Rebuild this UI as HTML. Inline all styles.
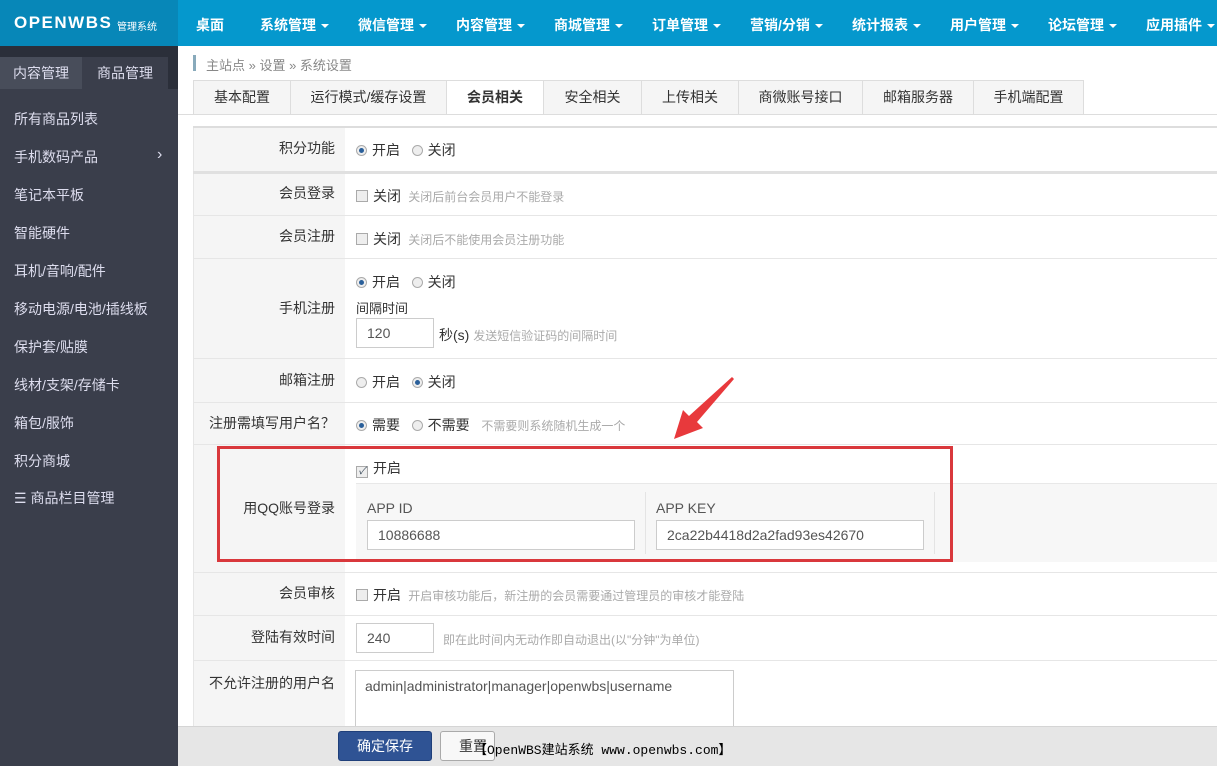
<!DOCTYPE html>
<html><head><meta charset="utf-8"><style>
*{margin:0;padding:0;box-sizing:border-box}
body{width:1217px;height:766px;overflow:hidden;position:relative;font-family:"Liberation Sans","Noto Sans CJK SC",sans-serif;font-size:13px;color:#333;background:#fff}
.a{position:absolute}
#top{left:0;top:0;width:1217px;height:46px;background:#0598cd}
#logo{left:0;top:0;width:178px;height:46px;background:#0787b8;color:#fff}
.nav{top:15px;color:#fff;font-weight:bold;font-size:14px;white-space:nowrap}
.car{display:inline-block;border-top:4px solid #fff;border-left:4px solid transparent;border-right:4px solid transparent;vertical-align:middle;margin-left:5px}
#side{left:0;top:46px;width:178px;height:720px;background:#3a3e4b}
.si{left:14px;color:#dde;font-size:14px}
.tab{top:80px;height:35px;border:1px solid #ddd;border-right:none;background:#f5f5f5;text-align:center;line-height:33px;font-size:14px;color:#333}
.row{left:193px;width:1024px;border-top:1px solid #e6e6e6}
.lab{left:193px;width:152px;background:#f5f5f5;border-left:1px solid #e6e6e6;text-align:right;padding-right:10px;font-size:14px;color:#333}
.t{font-size:14px;color:#333;white-space:nowrap}
.g{font-size:12px;color:#aaa;white-space:nowrap}
.rd{display:inline-block;width:11px;height:11px;border:1px solid #aaa;border-radius:50%;background:#eee;vertical-align:-1px;margin-right:5px;position:relative}
.rd.on::after{content:"";position:absolute;left:2px;top:2px;width:5px;height:5px;border-radius:50%;background:#2a5f9a}
.cb{display:inline-block;width:12px;height:12px;border:1px solid #aaa;background:#eee;vertical-align:-1px;margin-right:5px;font-size:10px;line-height:10px;color:#345;text-align:center}
.inp{border:1px solid #ccc;background:#fff;height:30px;line-height:28px;padding-left:10px;font-size:14px;color:#555}
</style></head><body>
<div id="top" class="a"></div>
<div id="logo" class="a"><span class="a" style="left:14px;top:13px;font-size:17px;font-weight:900;letter-spacing:1.5px">OPENWBS</span><span class="a" style="left:117px;top:18px;font-size:10px">管理系统</span></div>
<span class="a nav" style="left:196px">桌面</span>
<span class="a nav" style="left:260px">系统管理<i class="car"></i></span>
<span class="a nav" style="left:358px">微信管理<i class="car"></i></span>
<span class="a nav" style="left:456px">内容管理<i class="car"></i></span>
<span class="a nav" style="left:554px">商城管理<i class="car"></i></span>
<span class="a nav" style="left:652px">订单管理<i class="car"></i></span>
<span class="a nav" style="left:750px">营销/分销<i class="car"></i></span>
<span class="a nav" style="left:852px">统计报表<i class="car"></i></span>
<span class="a nav" style="left:950px">用户管理<i class="car"></i></span>
<span class="a nav" style="left:1048px">论坛管理<i class="car"></i></span>
<span class="a nav" style="left:1146px">应用插件<i class="car"></i></span>
<div id="side" class="a"></div>
<div class="a" style="left:0;top:46px;width:178px;height:11px;background:#2b2f3a"></div>
<div class="a" style="left:168px;top:57px;width:10px;height:32px;background:#2b2f3a"></div>
<div class="a" style="left:0;top:57px;width:82px;height:32px;background:#484d5a;color:#dde;font-size:14px;text-align:center;line-height:32px">内容管理</div>
<div class="a" style="left:82px;top:57px;width:86px;height:32px;color:#dde;font-size:14px;text-align:center;line-height:32px">商品管理</div>
<span class="a si" style="top:109px">所有商品列表</span>
<span class="a si" style="top:147px">手机数码产品</span><span class="a si" style="left:157px;top:146px;font-size:16px">›</span>
<span class="a si" style="top:185px">笔记本平板</span>
<span class="a si" style="top:223px">智能硬件</span>
<span class="a si" style="top:261px">耳机/音响/配件</span>
<span class="a si" style="top:299px">移动电源/电池/插线板</span>
<span class="a si" style="top:337px">保护套/贴膜</span>
<span class="a si" style="top:375px">线材/支架/存储卡</span>
<span class="a si" style="top:413px">箱包/服饰</span>
<span class="a si" style="top:451px">积分商城</span>
<span class="a si" style="top:488px">☰ 商品栏目管理</span>

<div class="a" style="left:193px;top:55px;width:3px;height:16px;background:#8ab"></div>
<span class="a" style="left:206px;top:55px;color:#888;font-size:13px">主站点 » 设置 » 系统设置</span>
<div class="a tab" style="left:193px;width:97px">基本配置</div>
<div class="a tab" style="left:290px;width:156px">运行模式/缓存设置</div>
<div class="a tab" style="left:446px;width:97px;background:#fff;border-bottom-color:#fff;font-weight:bold">会员相关</div>
<div class="a tab" style="left:543px;width:98px">安全相关</div>
<div class="a tab" style="left:641px;width:97px">上传相关</div>
<div class="a tab" style="left:738px;width:124px">商微账号接口</div>
<div class="a tab" style="left:862px;width:111px">邮箱服务器</div>
<div class="a tab" style="left:973px;width:111px;border-right:1px solid #ddd">手机端配置</div>
<div class="a" style="left:178px;top:114px;width:1039px;height:1px;background:#ddd"></div>

<div class="a lab" style="top:126px;height:46px;line-height:44px">积分功能</div>
<div class="a lab" style="top:172px;height:43px;line-height:43px">会员登录</div>
<div class="a lab" style="top:215px;height:43px;line-height:43px">会员注册</div>
<div class="a lab" style="top:258px;height:100px;line-height:100px">手机注册</div>
<div class="a lab" style="top:358px;height:44px;line-height:44px">邮箱注册</div>
<div class="a lab" style="top:402px;height:42px;line-height:42px">注册需填写用户名？</div>
<div class="a lab" style="top:444px;height:128px;line-height:128px">用QQ账号登录</div>
<div class="a lab" style="top:572px;height:43px;line-height:43px">会员审核</div>
<div class="a lab" style="top:615px;height:45px;line-height:45px">登陆有效时间</div>
<div class="a lab" style="top:660px;height:66px;line-height:46px">不允许注册的用户名</div>
<div class="a row" style="top:126px;border-top:2px solid #ddd"></div>
<div class="a row" style="top:171px;border-top:3px solid #e0e0e0"></div>
<div class="a row" style="top:215px"></div>
<div class="a row" style="top:258px"></div>
<div class="a row" style="top:358px"></div>
<div class="a row" style="top:402px"></div>
<div class="a row" style="top:444px"></div>
<div class="a row" style="top:572px"></div>
<div class="a row" style="top:615px"></div>
<div class="a row" style="top:660px"></div>

<span class="a t" style="left:356px;top:140px"><i class="rd on"></i>开启 &nbsp; <i class="rd"></i>关闭</span>
<span class="a t" style="left:356px;top:186px"><i class="cb"></i>关闭 <span class="g">&nbsp;关闭后前台会员用户不能登录</span></span>
<span class="a t" style="left:356px;top:229px"><i class="cb"></i>关闭 <span class="g">&nbsp;关闭后不能使用会员注册功能</span></span>
<span class="a t" style="left:356px;top:272px"><i class="rd on"></i>开启 &nbsp; <i class="rd"></i>关闭</span>
<span class="a t" style="left:356px;top:298px;font-size:13px">间隔时间</span>
<div class="a inp" style="left:356px;top:318px;width:78px">120</div>
<span class="a t" style="left:439px;top:325px">秒(s) <span class="g">发送短信验证码的间隔时间</span></span>
<span class="a t" style="left:356px;top:372px"><i class="rd"></i>开启 &nbsp; <i class="rd on"></i>关闭</span>
<span class="a t" style="left:356px;top:415px"><i class="rd on"></i>需要 &nbsp; <i class="rd"></i>不需要 &nbsp; <span class="g">不需要则系统随机生成一个</span></span>
<span class="a t" style="left:356px;top:458px"><i class="cb">✓</i>开启</span>
<div class="a" style="left:356px;top:483px;width:861px;height:79px;background:#f7f7f7;border-top:1px solid #e8e8e8"></div>
<div class="a" style="left:645px;top:492px;width:1px;height:62px;background:#e4e4e4"></div>
<div class="a" style="left:934px;top:492px;width:1px;height:62px;background:#e4e4e4"></div>
<span class="a t" style="left:367px;top:500px;color:#555">APP ID</span>
<span class="a t" style="left:656px;top:500px;color:#555">APP KEY</span>
<div class="a inp" style="left:367px;top:520px;width:268px">10886688</div>
<div class="a inp" style="left:656px;top:520px;width:268px">2ca22b4418d2a2fad93es42670</div>
<div class="a" style="left:217px;top:446px;width:736px;height:116px;border:3px solid #d9383c"></div>
<svg class="a" style="left:665px;top:372px" width="75" height="72"><polygon points="67,5 69,7 32,50 38,56 9,67 18,38 24,44" fill="#e8393c"/></svg>
<span class="a t" style="left:356px;top:585px"><i class="cb"></i>开启 <span class="g">&nbsp;开启审核功能后，新注册的会员需要通过管理员的审核才能登陆</span></span>
<div class="a inp" style="left:356px;top:623px;width:78px">240</div>
<span class="a g" style="left:443px;top:631px">即在此时间内无动作即自动退出(以"分钟"为单位)</span>
<div class="a" style="left:355px;top:670px;width:379px;height:70px;border:1px solid #ccc;padding:7px 9px;font-size:14px;color:#555">admin|administrator|manager|openwbs|username</div>
<div class="a" style="left:178px;top:726px;width:1039px;height:40px;background:#e6e6e6;border-top:1px solid #d5d5d5"></div>
<div class="a" style="left:338px;top:731px;width:94px;height:30px;background:#2f5394;border:1px solid #1f3f7a;border-radius:3px;color:#fff;font-size:14px;text-align:center;line-height:28px">确定保存</div>
<div class="a" style="left:440px;top:731px;width:55px;height:30px;background:#f8f8f8;border:1px solid #aaa;border-radius:3px;font-size:14px;line-height:28px;padding-left:18px">重置</div>
<span class="a" style="left:474px;top:739px;font-family:'Liberation Mono','Noto Sans CJK SC',monospace;font-size:13px;color:#000;white-space:nowrap">【OpenWBS建站系统 www.openwbs.com】</span>
</body></html>
